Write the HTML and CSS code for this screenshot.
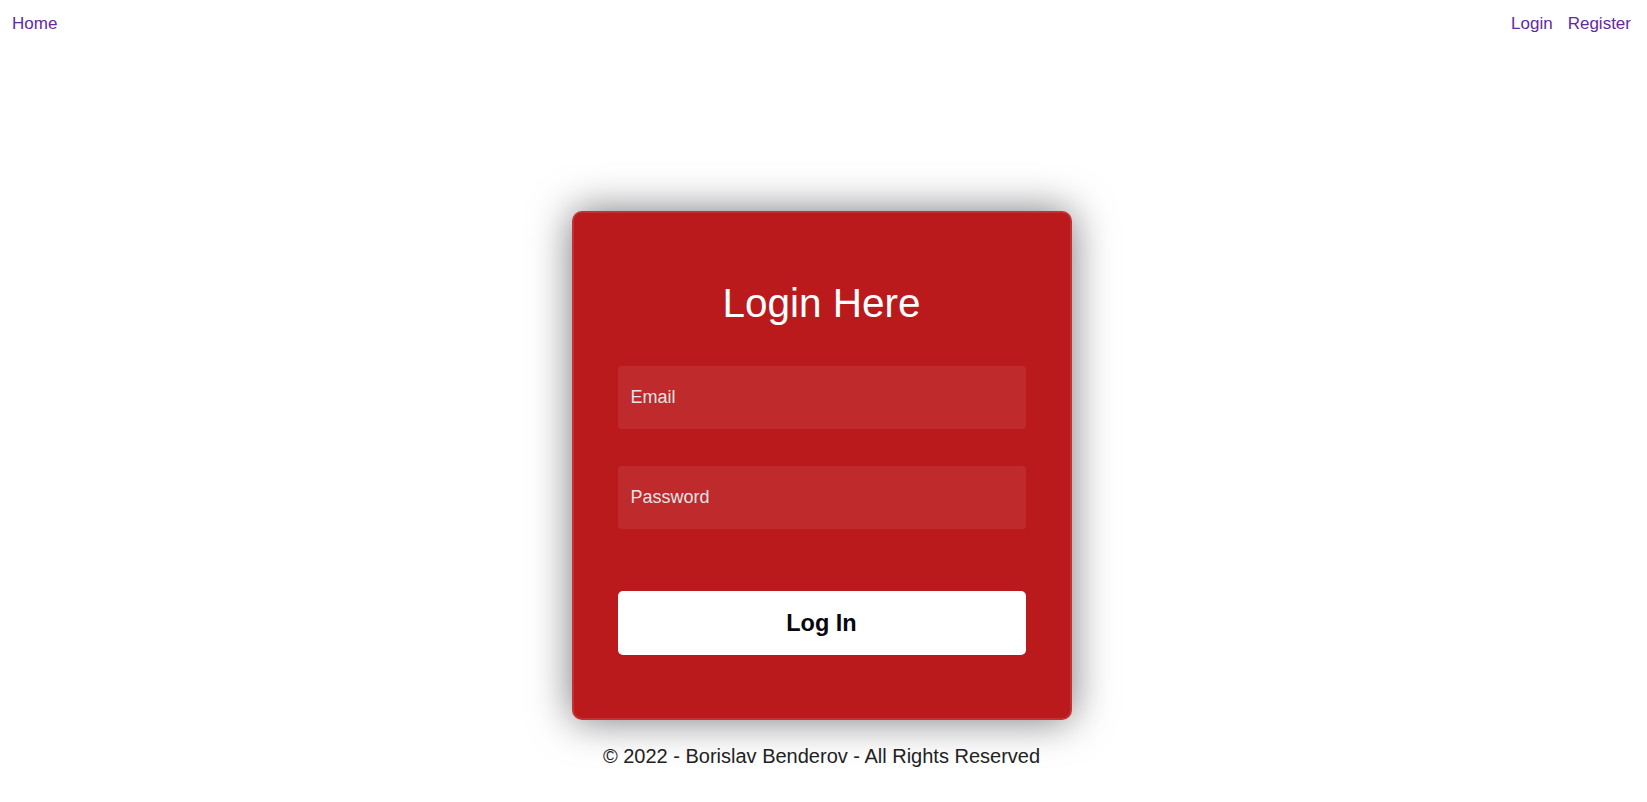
FILE: index.html
```html
<!DOCTYPE html>
<html lang="en">
<head>
<meta charset="utf-8">
<title>Login</title>
<link rel="stylesheet" href="styles.css">
</head>
<body>
<nav class="topnav">
  <a class="navlink" href="#">Home</a>
  <div class="navright">
    <a class="navlink" href="#">Login</a>
    <a class="navlink" href="#">Register</a>
  </div>
</nav>
<main class="main">
  <form class="card">
    <h1 class="title">Login Here</h1>
    <input class="field" type="text" placeholder="Email">
    <input class="field field-pw" type="password" placeholder="Password">
    <button class="btn" type="button">Log In</button>
  </form>
  <footer class="footer">© 2022 - Borislav Benderov - All Rights Reserved</footer>
</main>
</body>
</html>
```
FILE: styles.css
```css
html, body {
  margin: 0;
  padding: 0;
  background: #fff;
  font-family: "Liberation Sans", Arial, sans-serif;
}
.topnav {
  display: flex;
  justify-content: space-between;
  align-items: flex-start;
  padding: 14px 16px 0 12px;
  height: 20px;
}
.navright {
  display: flex;
  gap: 15px;
}
.navlink {
  color: #6329a3;
  text-decoration: none;
  font-size: 17px;
  line-height: 20px;
}
.main {
  display: flex;
  flex-direction: column;
  align-items: center;
  padding-right: 4px;
}
.card {
  box-sizing: border-box;
  width: 500px;
  height: 509px;
  margin-top: 177px;
  padding: 67px 44px 0 44px;
  background: #bb1a1c;
  border: 2px solid rgba(255, 255, 255, 0.1);
  border-radius: 10px;
  box-shadow: 0 0 40px rgba(8, 7, 16, 0.55);
  display: flex;
  flex-direction: column;
}
.title {
  margin: 0;
  color: #fff;
  font-weight: 400;
  font-size: 40.5px;
  line-height: 46px;
  text-align: center;
}
.field {
  box-sizing: border-box;
  display: block;
  width: 100%;
  height: 63px;
  margin-top: 40px;
  padding: 0 13px;
  border: none;
  border-radius: 3px;
  background: rgba(255, 255, 255, 0.07);
  color: #fff;
  font-family: "Liberation Sans", Arial, sans-serif;
  font-size: 18px;
  outline: none;
}
.field::placeholder {
  color: #e5e5e5;
  opacity: 1;
}
.field-pw {
  margin-top: 37px;
}
.btn {
  display: block;
  width: 100%;
  height: 64px;
  margin-top: 62px;
  border: none;
  border-radius: 5px;
  background: #fff;
  color: #080710;
  font-family: "Liberation Sans", Arial, sans-serif;
  font-size: 23.5px;
  font-weight: 700;
  cursor: pointer;
}
.footer {
  margin-top: 25px;
  color: #222;
  font-size: 20px;
  line-height: 23px;
  text-align: center;
}
```
